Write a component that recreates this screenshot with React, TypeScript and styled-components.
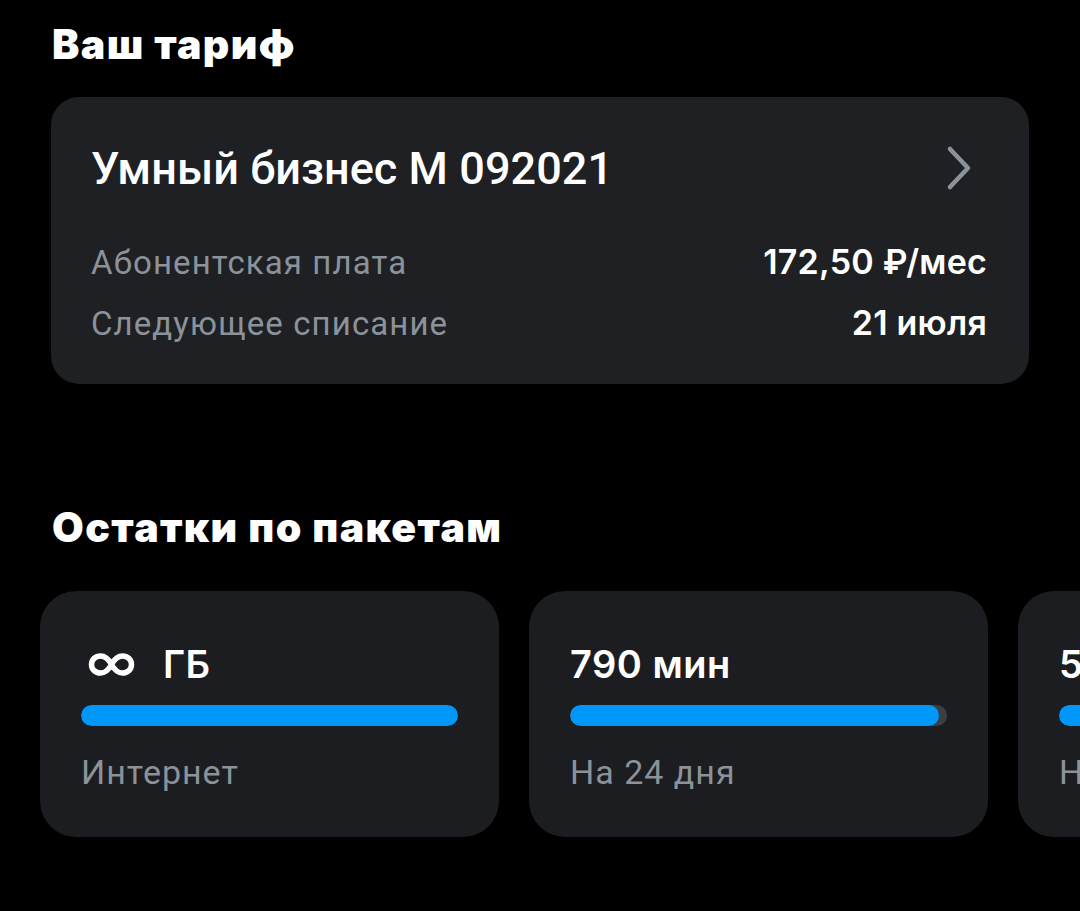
import * as React from 'react';
import styled, { createGlobalStyle } from 'styled-components';

const GlobalStyle = createGlobalStyle`
  html, body {
    margin: 0;
    padding: 0;
    background: #000;
  }
  body {
    font-family: Roboto, "Noto Sans", sans-serif;
    color: #fff;
    overflow: hidden;
  }
`;

const Page = styled.div`
  width: 1080px;
  height: 911px;
  background: #000;
  overflow: hidden;
  padding-top: 18px;
  box-sizing: border-box;
`;

const SectionTitle = styled.h2<{ $top?: number }>`
  margin: ${({ $top }) => $top ?? 0}px 0 0 52px;
  font-family: Inter, "Noto Sans", sans-serif;
  font-weight: 900;
  font-size: 41px;
  line-height: 52px;
  letter-spacing: 1.4px;
  color: #fff;
`;

const TariffCard = styled.div`
  margin: 27px 0 0 51px;
  width: 978px;
  height: 287px;
  box-sizing: border-box;
  background: #1e2023;
  border-radius: 28px;
  padding: 40px 42px 0 42px;
  display: flex;
  flex-direction: column;
`;

const TariffHeader = styled.div`
  display: flex;
  justify-content: space-between;
  align-items: center;
  height: 62px;
`;

const TariffName = styled.div`
  font-family: Roboto, sans-serif;
  font-weight: 500;
  font-size: 45px;
  letter-spacing: 0.05px;
  color: #fff;
  margin-left: -2px;
`;

const Chevron = styled.svg`
  width: 28px;
  height: 48px;
  margin-right: 14px;
`;

const InfoList = styled.div`
  display: flex;
  flex-direction: column;
  margin-top: 42px;
`;

const InfoRow = styled.div`
  display: flex;
  justify-content: space-between;
  align-items: baseline;
  height: 61px;
`;

const InfoLabel = styled.span`
  font-family: Roboto, sans-serif;
  font-size: 33px;
  letter-spacing: 1.1px;
  color: #8b9299;
  margin-left: -2px;
`;

const InfoValue = styled.span`
  font-family: Inter, sans-serif;
  font-weight: 600;
  font-size: 34px;
  letter-spacing: 0.2px;
  color: #fff;
`;

const PackagesRow = styled.div`
  display: flex;
  gap: 30px;
  margin: 38px 0 0 40px;
`;

const PackageCard = styled.div`
  flex: 0 0 458px;
  height: 246px;
  box-sizing: border-box;
  background: #1c1d20;
  border-radius: 36px;
  padding: 48px 41px 0 41px;
  display: flex;
  flex-direction: column;
`;

const PackageAmount = styled.div`
  display: flex;
  align-items: center;
  gap: 28px;
  height: 50px;
  font-family: Inter, sans-serif;
  font-weight: 600;
  font-size: 38px;
  letter-spacing: 0.5px;
  color: #fff;
`;

const IconSlot = styled.span`
  display: flex;
  padding-left: 7px;
`;

const Track = styled.div`
  margin-top: 16px;
  height: 21px;
  border-radius: 11px;
  background: #3b3e43;
  overflow: hidden;
  width: 377px;
`;

const Fill = styled.div`
  height: 100%;
  border-radius: 11px;
  background: #0097fa;
`;

const PackageLabel = styled.div`
  margin-top: 26px;
  font-family: Roboto, sans-serif;
  font-size: 34px;
  letter-spacing: 1px;
  color: #8b9299;
`;

const InfinityIcon = () => (
  <svg width="47" height="25" viewBox="0 0 47 25" fill="none">
    <path
      d="M23.5 12.5C20.5 7 17.5 4 12.5 4 7.5 4 3.5 7.5 3.5 12.5S7.5 21 12.5 21c5 0 8-3 11-8.5zm0 0c3 5.5 6 8.5 11 8.5s9-3.5 9-8.5-4-8.5-9-8.5c-5 0-8 3-11 8.5z"
      stroke="#fff"
      strokeWidth="5.5"
      strokeLinejoin="round"
    />
  </svg>
);

type Pack = {
  amount: React.ReactNode;
  label: string;
  percent: number;
};

const packs: Pack[] = [
  {
    amount: (
      <>
        <IconSlot>
          <InfinityIcon />
        </IconSlot>
        ГБ
      </>
    ),
    label: 'Интернет',
    percent: 100,
  },
  { amount: '790 мин', label: 'На 24 дня', percent: 98 },
  { amount: '50 SMS', label: 'На 24 дня', percent: 100 },
];

const App = () => {
  return (
    <Page>
      <GlobalStyle />
      <SectionTitle>Ваш тариф</SectionTitle>
      <TariffCard>
        <TariffHeader>
          <TariffName>Умный бизнес М 092021</TariffName>
          <Chevron viewBox="0 0 28 48" fill="none">
            <path
              d="M5 5l18 19L5 43"
              stroke="#8b9299"
              strokeWidth="4.5"
              strokeLinecap="round"
              strokeLinejoin="round"
            />
          </Chevron>
        </TariffHeader>
        <InfoList>
          <InfoRow>
            <InfoLabel>Абонентская плата</InfoLabel>
            <InfoValue>172,50 ₽/мес</InfoValue>
          </InfoRow>
          <InfoRow>
            <InfoLabel>Следующее списание</InfoLabel>
            <InfoValue>21 июля</InfoValue>
          </InfoRow>
        </InfoList>
      </TariffCard>
      <SectionTitle $top={117}>Остатки по пакетам</SectionTitle>
      <PackagesRow>
        {packs.map((p) => (
          <PackageCard key={p.label + p.percent}>
            <PackageAmount>{p.amount}</PackageAmount>
            <Track>
              <Fill style={{ width: `${p.percent}%` }} />
            </Track>
            <PackageLabel>{p.label}</PackageLabel>
          </PackageCard>
        ))}
      </PackagesRow>
    </Page>
  );
};

export default App;
